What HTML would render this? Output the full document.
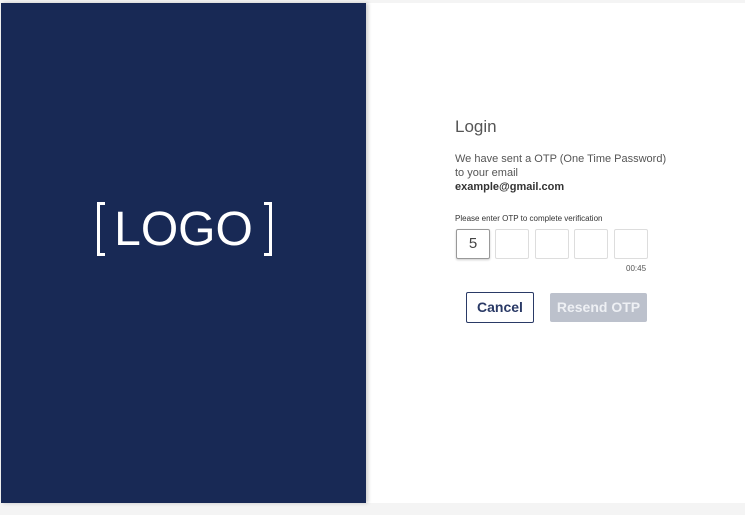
<!DOCTYPE html>
<html><head><style>
body{margin:0;width:745px;height:515px;background:#f4f4f4;font-family:"Liberation Sans",sans-serif;position:relative;overflow:hidden}
.card{position:absolute;left:1px;top:3px;width:744px;height:500px;background:#fff}
.nav{position:absolute;left:1px;top:3px;width:365px;height:500px;background:#182955;box-shadow:2px 0 4px rgba(0,0,0,.2);color:#fff}
.logo{position:absolute;left:0;width:365px;top:199px;text-align:center;font-size:48px;line-height:56px}
.br{position:absolute;top:199px;width:8px;height:54px;border:3px solid #fff;box-sizing:border-box}
.t{position:absolute;color:#555}
.box{position:absolute;top:229px;width:32px;height:28px;border:1px solid #ddd;border-radius:2px;font-size:15px;text-align:center;line-height:28px;color:#444}
.btn{position:absolute;top:292px;height:29px;border-radius:2px;font-size:14px;text-align:center;line-height:29px;font-weight:600}
</style></head><body>
<div class="card"></div>
<div class="nav"><div class="logo">LOGO</div>
<div class="br" style="left:96px;border-right:none"></div>
<div class="br" style="left:263px;border-left:none"></div></div>
<div class="t" style="left:455px;top:117px;font-size:17px">Login</div>
<div class="t" style="left:455px;top:152px;font-size:11px;line-height:14px">We have sent a OTP (One Time Password)<br>to your email<br><b style="color:#333">example@gmail.com</b></div>
<div class="t" style="left:455px;top:214px;font-size:8px;color:#333">Please enter OTP to complete verification</div>
<div class="box" style="left:456px;border-color:#999;box-shadow:0 1px 2px rgba(0,0,0,.2)">5</div>
<div class="box" style="left:495px"></div>
<div class="box" style="left:535px"></div>
<div class="box" style="left:574px"></div>
<div class="box" style="left:614px"></div>
<div class="t" style="left:626px;top:264px;font-size:8px">00:45</div>
<div class="btn" style="left:466px;width:66px;border:1px solid #2a3a66;color:#2a3a66">Cancel</div>
<div class="btn" style="left:550px;width:97px;top:293px;background:#bcc1cc;color:#eef0f4">Resend OTP</div>
</body></html>
